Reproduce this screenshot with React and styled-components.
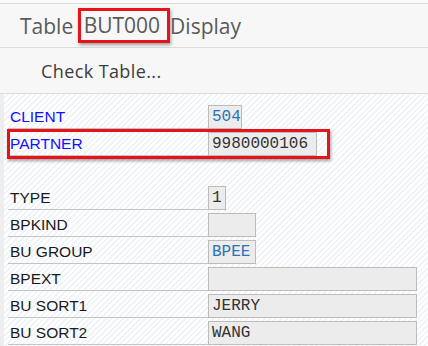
import styled, { createGlobalStyle } from "styled-components";

const GlobalStyle = createGlobalStyle`
  body {
    margin: 0;
    background: #fafafa;
  }
`;

const Page = styled.div`
  width: 428px;
  height: 346px;
  overflow: hidden;
  padding-top: 3px;
  box-sizing: border-box;
  background: #fafafa;
`;

const TitleBar = styled.div`
  height: 43px;
  border-top: 1px solid #dcdcdc;
  border-bottom: 1px solid #dcdcdc;
  background: #f7f7f7;
  display: flex;
  align-items: center;
  padding-left: 20px;
  font-family: "Open Sans", sans-serif;
  font-size: 21px;
  color: #5a5a5a;
  white-space: pre;
`;

const Marked = styled.span`
  display: inline-block;
  border: 3px solid #e8121a;
  padding: 1px 7px 1px 3px;
  margin-left: -1px;
  line-height: 27px;
  box-shadow: 1px 2px 3px rgba(0, 0, 0, 0.35);
`;

const Toolbar = styled.div`
  height: 45px;
  border-bottom: 1px solid #dcdcdc;
  background: #f7f7f7;
  display: flex;
  align-items: center;
  padding-left: 41px;
  font-family: "Open Sans", sans-serif;
  font-size: 18px;
  letter-spacing: 0.4px;
  color: #3c3c3c;
`;

const Content = styled.div`
  height: 260px;
  border-left: 4px solid #eeeeee;
  padding: 11px 0 0 4px;
  background: repeating-linear-gradient(
    135deg,
    #ffffff 0px,
    #ffffff 2px,
    #f1f5f9 2px,
    #f1f5f9 4px
  );
`;

const Group = styled.div`
  display: flex;
  flex-direction: column;
  gap: 3px;
  margin-bottom: ${(p) => p.$after || 0}px;
`;

const Row = styled.div`
  position: relative;
  display: flex;
  align-items: flex-end;
  height: 24px;

  ${(p) =>
    p.$marked &&
    `
    &::after {
      content: "";
      position: absolute;
      left: -1px;
      top: -3px;
      width: 323px;
      height: 30px;
      box-sizing: border-box;
      border: 3px solid #e8121a;
      box-shadow: 1px 2px 3px rgba(0, 0, 0, 0.35);
      pointer-events: none;
    }
  `}
`;

const Label = styled.div`
  width: 200px;
  height: 24px;
  box-sizing: border-box;
  padding-left: 2px;
  border-bottom: 1px solid #c4c4c4;
  font-family: "Liberation Sans", Arial, sans-serif;
  font-size: 15.5px;
  line-height: 24px;
  color: ${(p) => (p.$key ? "#1010ff" : "#1a1a1a")};
`;

const Field = styled.div`
  width: ${(p) => p.$w}px;
  height: 24px;
  box-sizing: border-box;
  border: 1px solid #bcbcbc;
  background: #ececec;
  padding-left: 3px;
  font-family: "Liberation Mono", monospace;
  font-size: 16px;
  line-height: 22px;
  color: ${(p) => (p.$blue ? "#2a73b8" : "#333333")};
  white-space: pre;
`;

const keyFields = [
  { label: "CLIENT", value: "504", w: 34, blue: true },
  { label: "PARTNER", value: "9980000106", w: 109, marked: true },
];

const fields = [
  { label: "TYPE", value: "1", w: 18 },
  { label: "BPKIND", value: "", w: 48 },
  { label: "BU GROUP", value: "BPEE", w: 48, blue: true },
  { label: "BPEXT", value: "", w: 209 },
  { label: "BU SORT1", value: "JERRY", w: 209 },
  { label: "BU SORT2", value: "WANG", w: 209 },
];

export default function App() {
  return (
    <Page>
      <GlobalStyle />
      <TitleBar>
        Table <Marked>BUT000</Marked>Display
      </TitleBar>
      <Toolbar>Check Table...</Toolbar>
      <Content>
        <Group $after={30}>
          {keyFields.map((f) => (
            <Row key={f.label} $marked={f.marked}>
              <Label $key>{f.label}</Label>
              <Field $w={f.w} $blue={f.blue}>{f.value}</Field>
            </Row>
          ))}
        </Group>
        <Group>
          {fields.map((f) => (
            <Row key={f.label}>
              <Label>{f.label}</Label>
              <Field $w={f.w} $blue={f.blue}>{f.value}</Field>
            </Row>
          ))}
        </Group>
      </Content>
    </Page>
  );
}
